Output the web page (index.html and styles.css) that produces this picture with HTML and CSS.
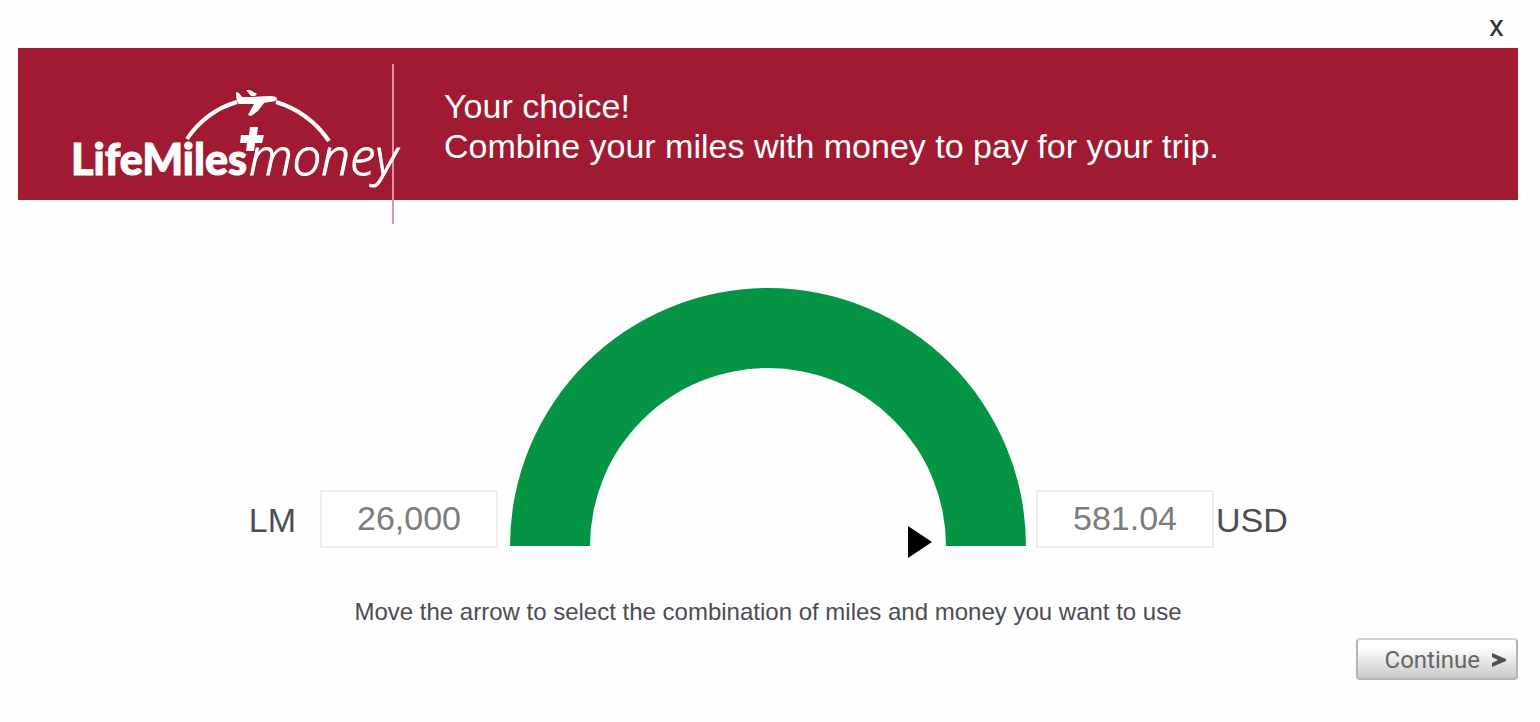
FILE: index.html
```
<!DOCTYPE html>
<html lang="en">

<head>
    <meta charset="UTF-8">
    <meta name="viewport" content="width=device-width, initial-scale=1.0">
    <title>LifeMiles + Money</title>
    <link rel="stylesheet" href="styles.css">
</head>

<body>
    <div class="modal">
        <div class="topbar">
            <button type="button" class="close">x</button>
        </div>

        <header class="banner">
            <div class="brand">
                <svg class="logo" viewBox="0 0 340 110" role="img" aria-label="LifeMiles + money">
                    <!-- Flight path -->
                    <path class="route" d="M118 55 Q137 27 168 18" />
                    <path class="route" d="M207 18 Q240 28 260 57" />
                    <!-- Plane -->
                    <path class="shape" d="M167 8 L170 9 L173 13 L181 13 L201 12 Q208 12 208 15 Q207 18 200 18 L195 19 L189 27 L182 32 L179 31 L185 20 L170 20 Q167 18 167 8 Z" />
                    <path class="shape" d="M177 6 L181 6 L188 10 L186 12 L182 12 Z" />
                    <!-- Plus -->
                    <path class="shape" d="M181 43 H189 L188 51 H195 L193 59 H186 L185 67 H177 L178 59 H171 L172 51 H180 Z" />
                    <text class="logo-miles" x="2" y="91">LifeMiles</text>
                    <text class="logo-money" x="180" y="91">money</text>
                </svg>
            </div>
            <p class="slogan">Your choice!<br>Combine your miles with money to pay for your trip.</p>
        </header>

        <form class="selector">
            <div class="amounts">
                <div class="amount amount-miles">
                    <label for="miles">LM</label>
                    <input type="text" id="miles" value="26,000">
                </div>
                <div class="gauge">
                    <svg viewBox="0 0 516 258" aria-hidden="true">
                        <path d="M0 258 A258 258 0 0 1 516 258 H436 A178 178 0 0 0 80 258 Z" />
                    </svg>
                    <input type="range" class="arrow" min="0" max="100" value="100" aria-label="Combination of miles and money">
                </div>
                <div class="amount amount-money">
                    <input type="text" id="money" value="581.04">
                    <label for="money">USD</label>
                </div>
            </div>
            <p class="hint">Move the arrow to select the combination of miles and money you want to use</p>
            <div class="actions">
                <button type="button" class="continue">
                    Continue
                    <svg viewBox="0 0 14 14" aria-hidden="true">
                        <path d="M0 0 L14 6 V8 L0 14 V10 L6 7 L0 4 Z" />
                    </svg>
                </button>
            </div>
        </form>
    </div>
</body>

</html>
```
FILE: styles.css
```
* {
    box-sizing: border-box;
}

body {
    margin: 0;
    background-color: #fefefe;
    font-family: "Liberation Sans", Arial, sans-serif;
    color: #4c4d52;
}

.modal {
    padding: 8px 22px 40px 18px;
}

.topbar {
    display: flex;
    justify-content: flex-end;
    align-items: flex-start;
    height: 40px;
    padding-right: 14px;
}

.close {
    padding: 0;
    border: 0;
    background: none;
    font-family: Roboto, sans-serif;
    font-size: 30px;
    line-height: 36px;
    color: #333;
    cursor: pointer;
}

.banner {
    display: flex;
    height: 152px;
    padding-top: 16px;
    background-color: #a01b32;
    color: white;
}

.brand {
    flex: none;
    width: 376px;
    height: 160px;
    padding: 20px 0 0 51px;
    border-right: 2px solid #dc98a2;
}

.logo {
    display: block;
    width: 340px;
    height: 110px;
}

.route {
    fill: none;
    stroke: white;
    stroke-width: 4;
}

.shape {
    fill: white;
}

.logo-miles {
    fill: white;
    stroke: white;
    stroke-width: 1;
    font-family: Lato, sans-serif;
    font-size: 43px;
    font-weight: 900;
}

.logo-money {
    fill: white;
    stroke: white;
    stroke-width: 1;
    font-family: "Open Sans", sans-serif;
    font-size: 51px;
    font-style: italic;
    font-weight: 300;
}

.slogan {
    margin: 0;
    padding: 22px 0 0 50px;
    font-size: 34px;
    line-height: 40px;
}

.amounts {
    display: grid;
    grid-template-columns: 1fr 516px 1fr;
    align-items: end;
    padding-top: 88px;
}

.amount {
    display: flex;
    align-items: center;
    font-size: 34px;
}

.amount-miles {
    justify-content: flex-end;
    gap: 24px;
    padding-right: 12px;
}

.amount-money {
    gap: 2px;
    padding-left: 10px;
}

.amount label {
    padding-top: 2px;
}

.amount input {
    width: 178px;
    height: 58px;
    padding: 0 0 2px;
    border: 2px solid #eee;
    background-color: white;
    font: inherit;
    color: #7c7c7c;
    text-align: center;
}

.gauge {
    position: relative;
    padding-bottom: 2px;
}

.gauge svg {
    display: block;
    width: 100%;
    fill: #059444;
}

/* Lies over the arc, from its left inner edge to its right one */
.arrow {
    position: absolute;
    right: 94px;
    bottom: -10px;
    left: 94px;
    height: 32px;
    margin: 0;
    appearance: none;
    background: none;
    cursor: pointer;
}

.arrow::-webkit-slider-thumb {
    width: 24px;
    height: 32px;
    appearance: none;
    background-color: black;
    clip-path: polygon(0 0, 100% 50%, 0 100%);
}

.hint {
    margin: 0;
    padding-top: 48px;
    font-size: 24px;
    line-height: 32px;
    text-align: center;
}

.actions {
    display: flex;
    justify-content: flex-end;
    padding-top: 10px;
}

.continue {
    display: flex;
    align-items: center;
    gap: 12px;
    height: 42px;
    padding: 2px 10px 0 27px;
    border: 2px solid #b5b5b5;
    border-top-color: #d0d0d0;
    border-radius: 4px;
    background: linear-gradient(white 20%, #c9c9c9);
    font-family: Roboto, sans-serif;
    font-size: 24px;
    color: #666;
    cursor: pointer;
}

.continue svg {
    width: 14px;
    height: 14px;
    fill: #505050;
}
```
